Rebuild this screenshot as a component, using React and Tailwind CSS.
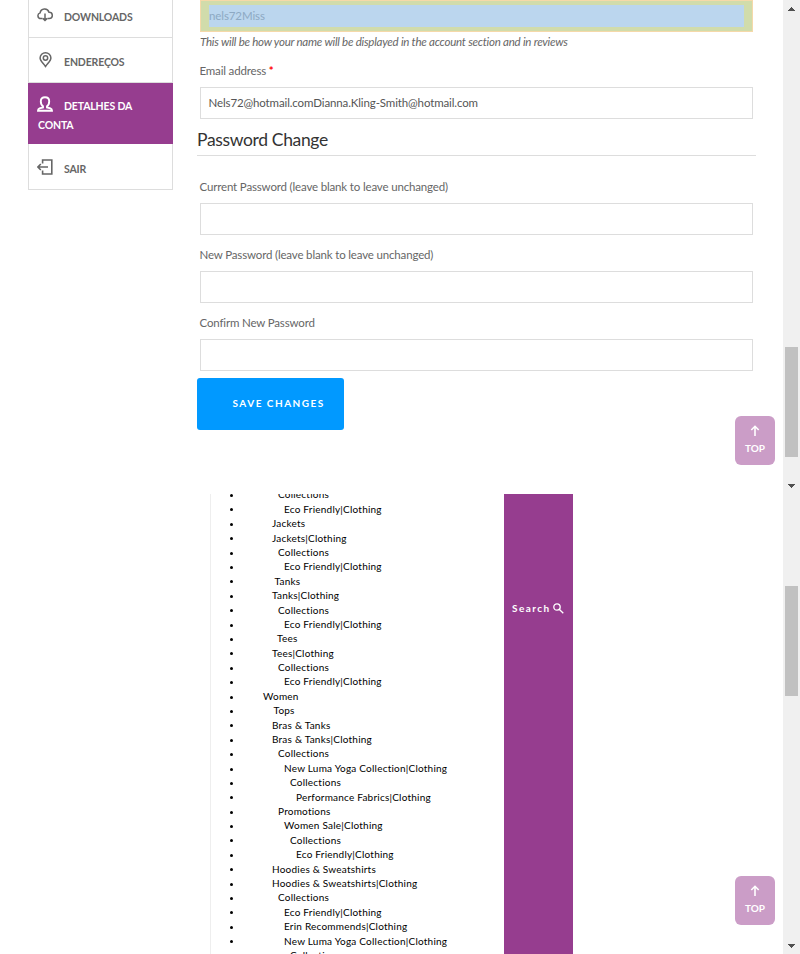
import React from "react";

const categories = [
  ["Collections", 278],
  ["Eco Friendly|Clothing", 284],
  ["Jackets", 272],
  ["Jackets|Clothing", 272],
  ["Collections", 278],
  ["Eco Friendly|Clothing", 284],
  ["Tanks", 274.5],
  ["Tanks|Clothing", 272],
  ["Collections", 278],
  ["Eco Friendly|Clothing", 284],
  ["Tees", 277],
  ["Tees|Clothing", 272],
  ["Collections", 278],
  ["Eco Friendly|Clothing", 284],
  ["Women", 263],
  ["Tops", 273.5],
  ["Bras & Tanks", 272],
  ["Bras & Tanks|Clothing", 272],
  ["Collections", 278],
  ["New Luma Yoga Collection|Clothing", 284],
  ["Collections", 290],
  ["Performance Fabrics|Clothing", 296],
  ["Promotions", 278],
  ["Women Sale|Clothing", 284],
  ["Collections", 290],
  ["Eco Friendly|Clothing", 296],
  ["Hoodies & Sweatshirts", 272],
  ["Hoodies & Sweatshirts|Clothing", 272],
  ["Collections", 278],
  ["Eco Friendly|Clothing", 284],
  ["Erin Recommends|Clothing", 284],
  ["New Luma Yoga Collection|Clothing", 284],
  ["Collections", 290],
];

function CloudIcon() {
  return (
    <svg width="16" height="14" viewBox="0 0 16 14" fill="none" stroke="currentColor" strokeWidth="1.5" className="-ml-px mt-px">
      <path d="M5.500 10.600H3.800a2.900 2.900 0 0 1-.7-5.700A4.600 4.600 0 0 1 12 4.200a3.200 3.200 0 0 1 .2 6.400H10.500M8 5.500v7M5.900 10.400 8 12.500l2.100-2.100" />
    </svg>
  );
}

function PinIcon() {
  return (
    <svg width="16" height="16" viewBox="0 0 16 16" fill="none" stroke="currentColor" strokeWidth="1.5">
      <path d="M7.500 14.500C5 11 2.100 8.800 2.100 6a5.400 5.200 0 0 1 10.800 0c0 2.800-2.900 5-5.400 8.500Z" />
      <circle cx="7.500" cy="6" r="2.200" />
    </svg>
  );
}

function UserIcon() {
  return (
    <svg width="16" height="16" viewBox="0 0 16 16" fill="none" stroke="currentColor" strokeWidth="1.9" className="-ml-px">
      <path d="M6 10.200C4.500 9.200 3.800 7.500 3.800 5.200 3.800 2.500 5.300 1.200 8 1.200s4.200 1.300 4.200 4c0 2.300-.7 4-2.200 5v1.300l3.500.9c1 .3 1.500.9 1.500 2.400H1c0-1.500.5-2.100 1.500-2.400l3.500-.9Z" />
    </svg>
  );
}

function ExitIcon() {
  return (
    <svg width="16" height="16" viewBox="0 0 16 16" fill="none" stroke="currentColor" strokeWidth="1.6" className="-ml-px">
      <path d="M5.600 4.500V1h9.200v14H5.600v-3.500M11 8H1M3.800 5 .9 8l2.900 3" />
    </svg>
  );
}

function NavItem({ icon, children, className }) {
  return (
    <li className={"px-[9px] text-[10.5px] font-bold leading-[19px] tracking-[-0.15px] " + className}>
      <span className="mr-[10px] inline-block h-4 w-4 align-[-2px]">{icon}</span>
      {children}
    </li>
  );
}

function Field({ label, value }) {
  return (
    <div className="ml-[3px] h-[68px] w-[553px]">
      <label className="-ml-[0.5px] block h-8 text-[11.5px] leading-[32px] tracking-[-0.16px]">{label}</label>
      <div className="h-8 border border-[#ddd] px-[7.5px] text-[11.5px] leading-[30px] tracking-[-0.12px] text-[#555]">{value}</div>
    </div>
  );
}

function TopButton() {
  return (
    <button className="absolute bottom-[29px] right-[25px] flex h-[49px] w-10 flex-col items-center rounded-[6px] bg-[#cb9dc7] pt-[9px] text-white">
      <svg width="10" height="12" viewBox="0 0 10 12" fill="none" stroke="currentColor" strokeWidth="1.6">
        <path d="M5 11V1.500M1.300 5 5 1.300 8.700 5" />
      </svg>
      <span className="mt-[3px] text-[10px] font-bold leading-[16px]">TOP</span>
    </button>
  );
}

function Scrollbar({ thumb, up }) {
  return (
    <div className="flex w-[17px] shrink-0 flex-col items-center bg-[#f0f0f0] text-[#505050]">
      <svg width="7" height="4" viewBox="0 0 7 4" shapeRendering="crispEdges" className={"mt-[7px] shrink-0 " + (up ? "" : "invisible")}>
        <path fill="currentColor" d="M3 0h1v1h1v1h1v1h1v1H0V3h1V2h1V1h1z" />
      </svg>
      <div className={"mr-px h-[110px] w-[13px] shrink-0 bg-[#c1c1c1] " + thumb} />
      <svg width="7" height="4" viewBox="0 0 7 4" shapeRendering="crispEdges" className="mb-[6px] mt-auto shrink-0">
        <path fill="currentColor" d="M0 0h7v1H6v1H5v1H4v1H3V3H2V2H1V1H0z" />
      </svg>
    </div>
  );
}

export default function App() {
  return (
    <div className="h-[954px] w-[800px] overflow-hidden bg-white font-['Lato',sans-serif] text-[#666]">
      <section className="relative flex h-[494px]">
        <ul className="ml-7 h-[190px] w-[145px] shrink-0">
          <NavItem icon={<CloudIcon />} className="h-[38px] border border-t-0 border-[#ddd] pt-[7px]">DOWNLOADS</NavItem>
          <NavItem icon={<PinIcon />} className="h-[45px] border border-t-0 border-[#ddd] pt-[14px]">ENDEREÇOS</NavItem>
          <NavItem icon={<UserIcon />} className="h-[61px] border border-[#963d8f] bg-[#963d8f] pt-[12px] text-white">DETALHES DA CONTA</NavItem>
          <NavItem icon={<ExitIcon />} className="h-[46px] border border-t-0 border-[#ddd] pt-[15px]">SAIR</NavItem>
        </ul>
        <main className="ml-6 w-[559px] shrink-0">
          <div className="ml-[3px] h-8 w-[553px] border border-[#f5d9a9] bg-[#d1dcab] px-2 py-1">
            <div className="h-[22px] w-[535px] bg-[#bbd6ee] text-[11.5px] leading-[22px] tracking-[-0.1px] text-[#8da9c3]">nels72Miss</div>
          </div>
          <p className="ml-[3px] h-[23px] text-[11.5px] italic leading-5 tracking-[-0.23px]">This will be how your name will be displayed in the account section and in reviews</p>
          <Field label={<>Email address <b className="text-[#f00]">*</b></>} value="Nels72@hotmail.comDianna.Kling-Smith@hotmail.com" />
          <h2 className="mb-[15px] h-[33px] border-b border-[#ddd] text-[17.5px] leading-[34px] tracking-[-0.35px] text-[#333]">Password Change</h2>
          <Field label="Current Password (leave blank to leave unchanged)" />
          <Field label="New Password (leave blank to leave unchanged)" />
          <Field label="Confirm New Password" />
          <button className="mt-[3px] block h-[52px] w-[147px] rounded-[3px] bg-[#0199ff] pb-px pl-[35.500px] text-left text-[10px] font-bold tracking-[1.5px] text-white">SAVE CHANGES</button>
        </main>
        <div className="grow" />
        <Scrollbar up thumb="mt-[336px]" />
        <TopButton />
      </section>

      <section className="relative flex h-[460px] overflow-hidden">
        <div className="ml-[210px] w-[294px] shrink-0 border-l border-[#eee]">
          <ul className="-mt-[6.600px] text-[10px] leading-[14.400px] text-black">
            {categories.map(([name, x], i) => (
              <li key={i} className="flex h-[14.400px] items-center whitespace-pre">
                <span className="ml-[19px] mt-[2px] h-[3px] w-[3px] shrink-0 rounded-full bg-black" />
                <span className="tracking-[0.220px]" style={{ marginLeft: x - 233 }}>{name}</span>
              </li>
            ))}
          </ul>
        </div>
        <div className="flex w-[69px] shrink-0 items-start bg-[#963d8f] pl-2 pt-[107px] text-white">
          <span className="text-[10px] font-bold leading-[14px] tracking-[1.450px]">Search</span>
          <svg width="11" height="11" viewBox="0 0 11 11" fill="none" stroke="currentColor" strokeWidth="1.300" className="ml-[2.500px] mt-[2px]">
            <circle cx="4" cy="4" r="3.200" />
            <path d="m6.200 6.200 4.100 4.100" />
          </svg>
        </div>
        <div className="grow" />
        <Scrollbar thumb="mt-[81px]" />
        <TopButton />
      </section>
    </div>
  );
}
